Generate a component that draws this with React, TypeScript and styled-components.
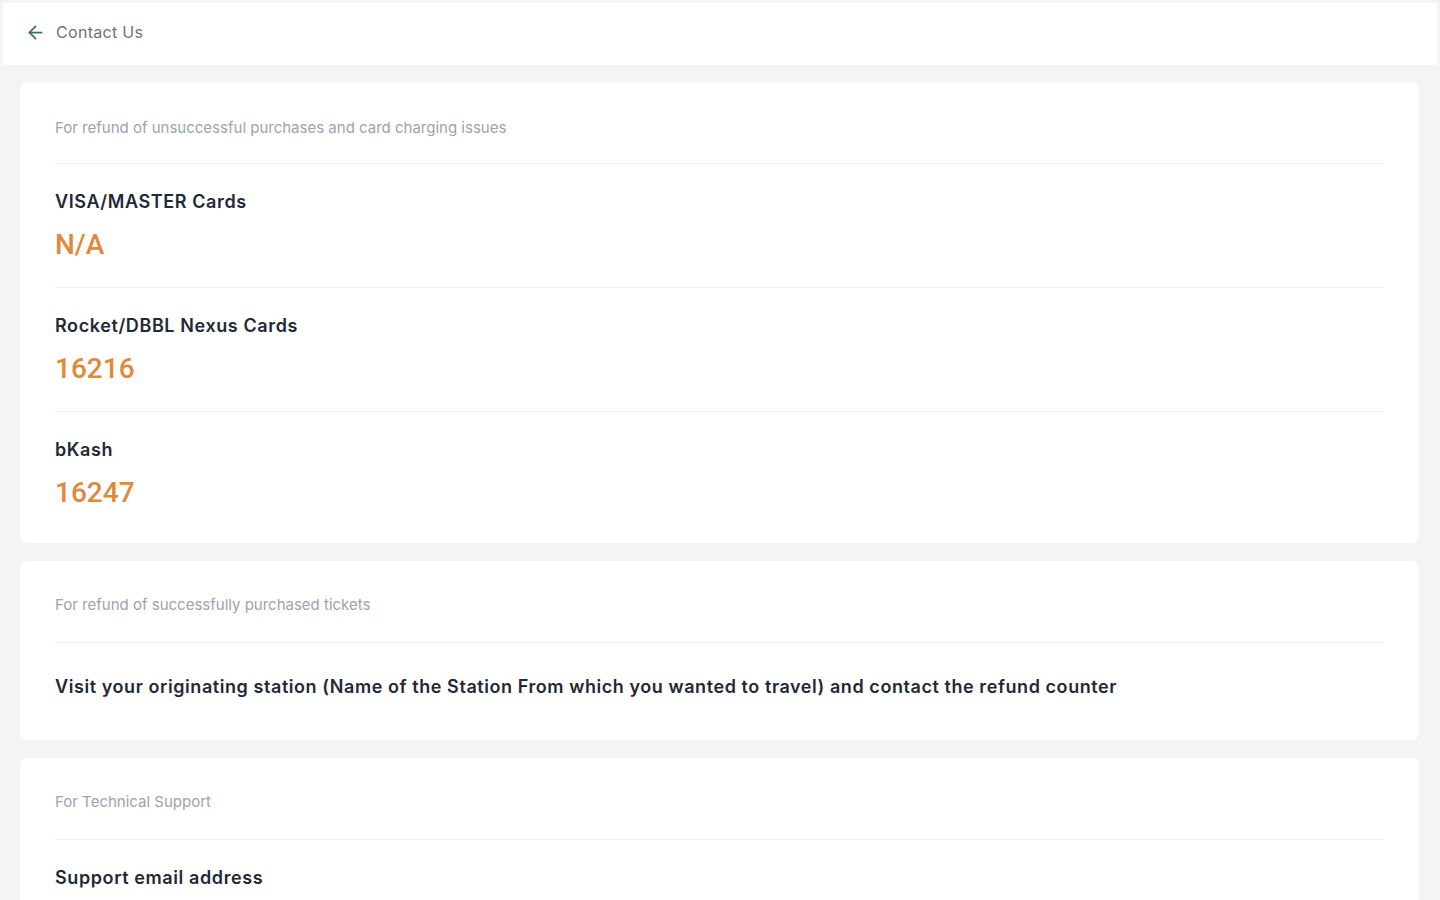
import React from 'react';
import styled, { createGlobalStyle } from 'styled-components';
import { ArrowLeft } from 'lucide-react';

const GlobalStyle = createGlobalStyle`
  html, body {
    margin: 0;
    padding: 0;
    background-color: #f3f4f6;
    font-family: Inter, "Noto Sans", "Liberation Sans", sans-serif;
  }
  * {
    box-sizing: border-box;
  }
`;

const Page = styled.div`
  min-height: 100vh;
  padding: 3px 3px 0 3px;
  background-color: #f3f4f6;
`;

const Header = styled.header`
  display: flex;
  align-items: center;
  gap: 10px;
  height: 62px;
  padding: 0 0 4px 22px;
  background-color: #ffffff;
`;

const BackButton = styled.button`
  display: flex;
  align-items: center;
  justify-content: center;
  padding: 0;
  border: none;
  background: none;
  color: #3d6e66;
  cursor: pointer;
`;

const HeaderTitle = styled.h1`
  margin: 0;
  font-size: 16px;
  font-weight: 400;
  letter-spacing: 0.3px;
  color: #6b7280;
`;

const Main = styled.main`
  display: flex;
  flex-direction: column;
  gap: 18px;
  padding: 17px 18px 0 17px;
`;

const Card = styled.section`
  background-color: #ffffff;
  border-radius: 8px;
  padding: 0 35px;
`;

const SectionTitle = styled.div<{ $top?: number }>`
  padding: ${(p) => p.$top ?? 35}px 0 ${(p) => 63 - (p.$top ?? 35)}px;
  font-size: 15px;
  line-height: 18px;
  color: #9ca3af;
  border-bottom: 1px solid #f0f1f3;
`;

const Row = styled.div<{ $last?: boolean }>`
  display: flex;
  flex-direction: column;
  gap: 15px;
  padding: 27px 0 ${(p) => (p.$last ? 33 : 25)}px;
  border-bottom: ${(p) => (p.$last ? 'none' : '1px solid #f0f1f3')};
`;

const Label = styled.div`
  font-size: 18px;
  line-height: 22px;
  font-weight: 600;
  letter-spacing: 0.6px;
  color: #1f2937;
`;

const Value = styled.div`
  font-family: Roboto, "Liberation Sans", sans-serif;
  font-size: 28px;
  line-height: 34px;
  font-weight: 500;
  color: #e0893a;
`;

const Note = styled.p`
  margin: 0;
  padding: 33px 0 42px;
  font-size: 18px;
  line-height: 22px;
  font-weight: 600;
  letter-spacing: 0.57px;
  color: #1f2937;
`;

const cardContacts = [
  { label: 'VISA/MASTER Cards', value: 'N/A' },
  { label: 'Rocket/DBBL Nexus Cards', value: '16216' },
  { label: 'bKash', value: '16247' },
];

const App: React.FC = () => {
  return (
    <>
      <GlobalStyle />
      <Page>
        <Header>
          <BackButton aria-label="Back">
            <ArrowLeft size={21} strokeWidth={2} />
          </BackButton>
          <HeaderTitle>Contact Us</HeaderTitle>
        </Header>
        <Main>
          <Card>
            <SectionTitle $top={37}>For refund of unsuccessful purchases and card charging issues</SectionTitle>
            {cardContacts.map((c, i) => (
              <Row key={c.label} $last={i === cardContacts.length - 1}>
                <Label>{c.label}</Label>
                <Value>{c.value}</Value>
              </Row>
            ))}
          </Card>
          <Card>
            <SectionTitle>For refund of successfully purchased tickets</SectionTitle>
            <Note>
              Visit your originating station (Name of the Station From which you wanted to travel) and contact the refund counter
            </Note>
          </Card>
          <Card>
            <SectionTitle>For Technical Support</SectionTitle>
            <Row $last>
              <Label>Support email address</Label>
            </Row>
          </Card>
        </Main>
      </Page>
    </>
  );
};

export default App;
